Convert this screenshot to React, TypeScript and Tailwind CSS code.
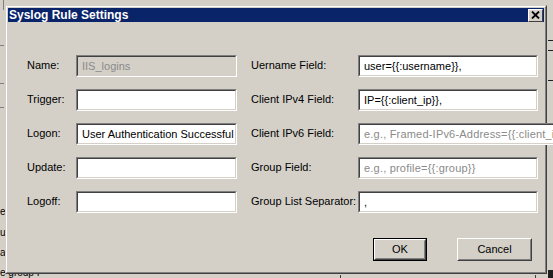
import React from "react";

const font = { fontFamily: '"Liberation Sans", Arial, sans-serif' };

function Sunken({
  value,
  placeholder,
  disabled,
}: {
  value?: string;
  placeholder?: string;
  disabled?: boolean;
}) {
  return (
    <div className="h-[22px] w-full border border-t-[#808080] border-l-[#808080] border-b-white border-r-white">
      <div
        className={`h-full w-full border border-t-[#404040] border-l-[#404040] border-b-[#d4d0c8] border-r-[#d4d0c8] flex items-center pl-[4px] overflow-hidden whitespace-nowrap text-[11px] ${
          disabled ? "bg-[#d4d0c8] text-[#8a8a8a]" : "bg-white text-black"
        }`}
      >
        {value ? (
          <span>{value}</span>
        ) : placeholder ? (
          <span className="text-[#8a8a8a] tracking-[0.2px]">{placeholder}</span>
        ) : null}
      </div>
    </div>
  );
}

function Row({
  label,
  children,
  labelW,
}: {
  label: string;
  children: React.ReactNode;
  labelW: string;
}) {
  return (
    <div className="flex items-center h-[22px]">
      <div className={`${labelW} shrink-0 text-[11px] text-black -mt-[2px]`}>{label}</div>
      <div className="flex-1">{children}</div>
    </div>
  );
}

function Button({ label, def, w }: { label: string; def?: boolean; w: string }) {
  const inner = (
    <div className="h-full w-full border border-t-white border-l-white border-b-[#404040] border-r-[#404040]">
      <div className="h-full w-full border border-t-[#d4d0c8] border-l-[#d4d0c8] border-b-[#808080] border-r-[#808080] flex items-center justify-center text-[11px] text-black">
        {label}
      </div>
    </div>
  );
  return (
    <div className={`${w} h-[23px] ${def ? "border border-black" : ""}`}>{inner}</div>
  );
}

export default function App() {
  return (
    <div
      className="relative w-[553px] h-[278px] overflow-hidden bg-[#d4d0c8]"
      style={font}
    >
      {/* underlying window fragments */}
      <div className="absolute left-[3px] top-0 w-px h-[10px] bg-[#808080]" />
      <div className="absolute left-0 top-[207px] text-[10px] text-black leading-none">e</div>
      <div className="absolute left-0 top-[228px] text-[10px] text-black leading-none">u</div>
      <div className="absolute left-0 top-[248px] text-[10px] text-black leading-none">a</div>
      <div className="absolute left-0 top-[268px] text-[10px] text-black leading-none">e group I</div>
      <div className="absolute left-0 top-[45px] w-[4px] h-px bg-[#808080]" />
      <div className="absolute left-0 top-[83px] w-[4px] h-px bg-[#808080]" />
      <div className="absolute left-0 top-[107px] w-[4px] h-px bg-[#808080]" />
      <div className="absolute right-0 top-[50px] w-[5px] h-px bg-[#202020]" />
      <div className="absolute right-0 top-[80px] w-[5px] h-px bg-[#202020]" />
      <div className="absolute right-0 top-[40px] w-[5px] h-px bg-[#202020]" />
      <div className="absolute right-0 top-[270px] w-[5px] h-[8px] bg-[#202020]" />
      <div className="absolute left-[340px] top-[275px] w-px h-[3px] bg-[#404040]" />
      <div className="absolute left-[535px] top-[275px] w-px h-[3px] bg-[#404040]" />

      {/* dialog window */}
      <div className="absolute left-[5px] top-[5px] w-[542px] h-[269px] border border-t-[#d4d0c8] border-l-[#d4d0c8] border-b-[#404040] border-r-[#404040]">
        <div className="h-full w-full border border-t-white border-l-white border-b-[#808080] border-r-[#808080] flex flex-col bg-[#d4d0c8] p-px">
          {/* title bar */}
          <div className="h-[14px] bg-[#0a246a] flex items-center justify-between pl-[1px] pr-px">
            <span className="text-white font-bold text-[12px] leading-none">
              Syslog Rule Settings
            </span>
            <div className="w-[15px] h-[13px] border border-t-white border-l-white border-b-[#404040] border-r-[#404040] bg-[#d4d0c8] flex items-center justify-center">
              <svg width="9" height="8" viewBox="0 0 9 8">
                <path d="M1 0.5 L8 7.5 M8 0.5 L1 7.5" stroke="#000" strokeWidth="1.8" />
              </svg>
            </div>
          </div>

          {/* body */}
          <div className="flex flex-col pt-[33px] pl-[19px] pr-[6px]">
            <div className="flex gap-[14px]">
              <div className="w-[211px] flex flex-col gap-[12px]">
                <Row label="Name:" labelW="w-[49px]">
                  <Sunken value="IIS_logins" disabled />
                </Row>
                <Row label="Trigger:" labelW="w-[49px]">
                  <Sunken />
                </Row>
                <Row label="Logon:" labelW="w-[49px]">
                  <Sunken value="User Authentication Successful" />
                </Row>
                <Row label="Update:" labelW="w-[49px]">
                  <Sunken />
                </Row>
                <Row label="Logoff:" labelW="w-[49px]">
                  <Sunken />
                </Row>
              </div>
              <div className="w-[287px] flex flex-col gap-[12px]">
                <Row label="Uername Field:" labelW="w-[107px]">
                  <Sunken value="user={{:username}}," />
                </Row>
                <Row label="Client IPv4 Field:" labelW="w-[107px]">
                  <Sunken value="IP={{:client_ip}}," />
                </Row>
                <Row label="Client IPv6 Field:" labelW="w-[107px]">
                  <Sunken placeholder="e.g., Framed-IPv6-Address={{:client_ipv6}}" />
                </Row>
                <Row label="Group Field:" labelW="w-[107px]">
                  <Sunken placeholder="e.g., profile={{:group}}" />
                </Row>
                <Row label="Group List Separator:" labelW="w-[107px]">
                  <Sunken value="," />
                </Row>
              </div>
            </div>
            <div className="flex justify-end gap-[30px] pt-[25px] pr-[6px]">
              <Button label="OK" def w="w-[54px]" />
              <Button label="Cancel" w="w-[75px]" />
            </div>
          </div>
        </div>
      </div>
    </div>
  );
}
